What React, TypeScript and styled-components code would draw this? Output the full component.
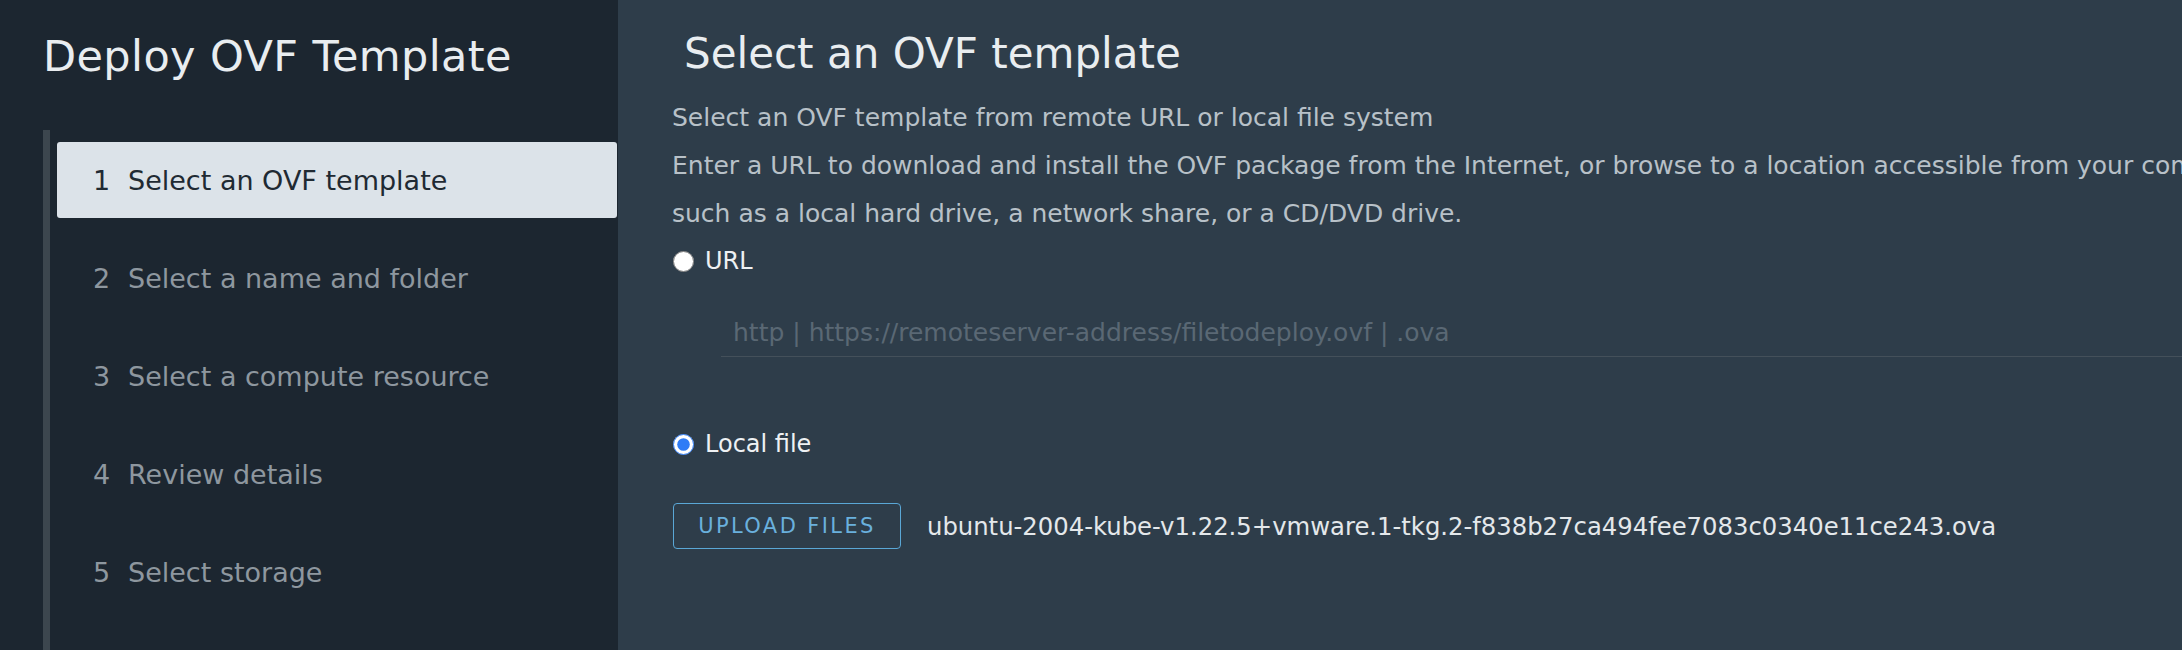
import React from "react";
import styled, { createGlobalStyle } from "styled-components";

const GlobalStyle = createGlobalStyle`
  html, body {
    margin: 0;
    padding: 0;
    background: #2e3d4a;
  }
  body {
    font-family: "DejaVu Sans", "Open Sans", sans-serif;
  }
  * { box-sizing: border-box; }
`;

const Shell = styled.div`
  display: flex;
  width: 2182px;
  height: 650px;
  overflow: hidden;
  background: #2e3d4a;
`;

const Sidebar = styled.aside`
  flex: none;
  width: 618px;
  background: #1c2630;
  display: flex;
  flex-direction: column;
`;

const WizardTitle = styled.h1`
  margin: 0;
  padding: 31px 0 0 43px;
  font-size: 43px;
  line-height: 50px;
  font-weight: 400;
  letter-spacing: 0.4px;
  color: #e9edf0;
  white-space: nowrap;
`;

const StepList = styled.ol`
  list-style: none;
  margin: 49px 1px 0 43px;
  padding: 12px 0 0 7px;
  border-left: 7px solid #3c464e;
  display: flex;
  flex-direction: column;
  gap: 22px;
  flex: 1;
`;

const StepItem = styled.li<{ $active?: boolean }>`
  display: flex;
  align-items: center;
  height: 76px;
  padding-left: 36px;
  border-radius: 3px;
  font-size: 27px;
  white-space: nowrap;
  background: ${(p) => (p.$active ? "#dce3e9" : "transparent")};
  color: ${(p) => (p.$active ? "#1f2a33" : "#8e979f")};
`;

const StepNumber = styled.span`
  display: inline-block;
  width: 35px;
`;

const Main = styled.main`
  flex: 1;
  min-width: 0;
  padding: 29px 0 0 54px;
  overflow: hidden;
`;

const PageTitle = styled.h2`
  margin: 0 0 0 12px;
  font-size: 42px;
  line-height: 50px;
  font-weight: 400;
  color: #e9edf0;
  white-space: nowrap;
`;

const Description = styled.p`
  margin: 15px 0 0;
  font-size: 25px;
  line-height: 48px;
  color: #b8c1c8;
  white-space: nowrap;
`;

const RadioRow = styled.label<{ $gap: number }>`
  display: flex;
  align-items: center;
  gap: 11px;
  height: 30px;
  margin-top: ${(p) => p.$gap}px;
  font-size: 24px;
  color: #eef1f3;
  white-space: nowrap;
`;

const Radio = styled.input`
  width: 21px;
  height: 21px;
  margin: 0 0 0 1px;
  accent-color: #2f7cf6;
`;

const UrlField = styled.div`
  margin: 33px 0 0 49px;
  height: 48px;
  border-bottom: 1px solid #44505a;
  display: flex;
  align-items: center;
`;

const UrlInput = styled.input`
  width: 100%;
  height: 100%;
  border: none;
  outline: none;
  background: transparent;
  padding: 0 0 0 12px;
  font-family: inherit;
  font-size: 25px;
  color: #e4e8eb;
  &::placeholder {
    color: #5a6874;
  }
`;

const UploadRow = styled.div`
  display: flex;
  align-items: center;
  gap: 26px;
  margin-top: 44px;
`;

const UploadButton = styled.button`
  flex: none;
  width: 228px;
  height: 46px;
  margin-left: 1px;
  padding: 0;
  border: 1px solid #5aa7d6;
  border-radius: 4px;
  background: transparent;
  color: #6ab0dd;
  font-family: inherit;
  font-size: 21px;
  letter-spacing: 2.4px;
  cursor: pointer;
`;

const FileName = styled.span`
  font-size: 24.3px;
  color: #e4e8eb;
  white-space: nowrap;
`;

const steps = [
  "Select an OVF template",
  "Select a name and folder",
  "Select a compute resource",
  "Review details",
  "Select storage",
];

export default function App() {
  return (
    <>
      <GlobalStyle />
      <Shell>
        <Sidebar>
          <WizardTitle>Deploy OVF Template</WizardTitle>
          <StepList>
            {steps.map((s, i) => (
              <StepItem key={s} $active={i === 0}>
                <StepNumber>{i + 1}</StepNumber>
                {s}
              </StepItem>
            ))}
          </StepList>
        </Sidebar>
        <Main>
          <PageTitle>Select an OVF template</PageTitle>
          <Description>
            Select an OVF template from remote URL or local file system
            <br />
            Enter a URL to download and install the OVF package from the Internet, or browse to a location accessible from your computer,
            <br />
            such as a local hard drive, a network share, or a CD/DVD drive.
          </Description>
          <RadioRow $gap={8}>
            <Radio type="radio" name="source" />
            URL
          </RadioRow>
          <UrlField>
            <UrlInput placeholder="http | https://remoteserver-address/filetodeploy.ovf | .ova" />
          </UrlField>
          <RadioRow $gap={72}>
            <Radio type="radio" name="source" defaultChecked />
            Local file
          </RadioRow>
          <UploadRow>
            <UploadButton>UPLOAD FILES</UploadButton>
            <FileName>ubuntu-2004-kube-v1.22.5+vmware.1-tkg.2-f838b27ca494fee7083c0340e11ce243.ova</FileName>
          </UploadRow>
        </Main>
      </Shell>
    </>
  );
}
